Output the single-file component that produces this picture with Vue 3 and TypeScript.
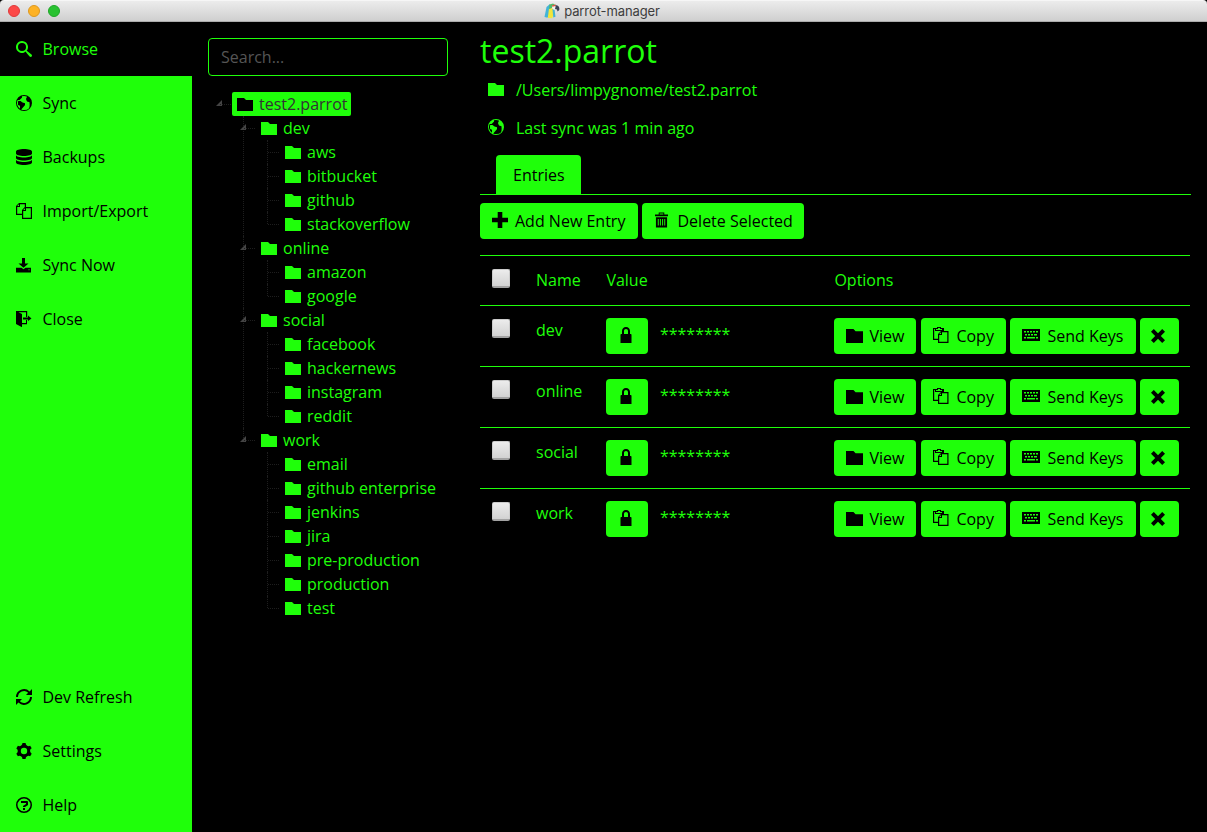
<script setup lang="ts">
interface Shape { box: string; d: string }
interface MenuItem { label: string; icon: string; active?: boolean }
interface Branch { name: string; leaves: string[] }

const icons: Record<string, Shape> = {
  search: { box: '0 0 16 16', d: 'M15.504 13.616l-3.79-3.223c-.392-.353-.811-.514-1.149-.499a6 6 0 1 0-.672.672c-.016.338.146.757.499 1.149l3.223 3.79c.552.613 1.453.665 2.003.115s.498-1.452-.115-2.003zM6 10a4 4 0 1 1 0-8 4 4 0 0 1 0 8z' },
  earth: { box: '0 0 16 16', d: 'M8 0a8 8 0 1 0 0 16A8 8 0 0 0 8 0zm0 15c-.984 0-1.92-.203-2.769-.57l3.643-4.098A.5.5 0 0 0 9 10V8.500a.5.5 0 0 0-.5-.5c-1.765 0-3.628-1.835-3.646-1.854A.5.5 0 0 0 4.500 6h-2a.5.5 0 0 0-.5.5v3c0 .189.107.363.276.447L4 10.809v2.936A6.997 6.997 0 0 1 1.674 5H3.500a.5.5 0 0 0 .354-.146l2-2A.5.5 0 0 0 6 2.500V1.289A6.994 6.994 0 0 1 11.180 1.757c-.061.053-.119.107-.176.164a3 3 0 0 0 2.119 5.122c.073 0 .147-.003.221-.008.290 1.088.57 3.903-.18 5.999a.5.5 0 0 0-.008.093A6.980 6.980 0 0 1 8 15z' },
  database: { box: '0 0 16 16', d: 'M8 0C3.580 0 0 1.120 0 2.500v2C0 5.880 3.580 7 8 7s8-1.120 8-2.500v-2C16 1.120 12.420 0 8 0zM8 8.500c-4.420 0-8-1.120-8-2.500v3c0 1.380 3.580 2.500 8 2.500s8-1.120 8-2.500V6c0 1.380-3.580 2.500-8 2.500zM8 13c-4.420 0-8-1.120-8-2.500v3C0 14.880 3.580 16 8 16s8-1.120 8-2.500v-3c0 1.380-3.580 2.500-8 2.500z' },
  copy: { box: '0 0 16 16', d: 'M10 4V0H3L0 3v9h6v4h10V4h-6zM3 1.200V3H1.200L3 1.200zM1.200 10.800V4H4V1.200h4.800V4L6 7v3.800H1.200zm7.800-5.600V7H7.200L9 5.200zM14.800 14.800H7.200V8H10V5.200h4.800v9.600z' },
  download: { box: '0 -1 16 16', d: 'M6 0h3v5.500h3.500L7.500 9.800 2.500 5.500H6zM0 9.800h5.500l2 1.400 2-1.400H15v4.700H0zM12.500 11.300v1h1v-1z' },
  exit: { box: '0 0 16 16', d: 'M12 10V8.500H7v-2h5V4.500l3.500 3zM11 9v4.200H6v3L0 13V0h11.200v6H10V1.200H2.500L6 3v9h4V9z' },
  refresh: { box: '0 0 16 16', d: 'M0 8h2a6 6 0 0 1 10.200-4.200L10 6h6V0l-2.400 2.400A8 8 0 0 0 0 8zM16 8h-2a6 6 0 0 1-10.200 4.200L6 10H0v6l2.400-2.400A8 8 0 0 0 16 8z' },
  gear: { box: '0 0 16 16', d: 'M14.590 9.535a3.060 3.060 0 0 1 1.127-4.164l-1.548-2.681a3.061 3.061 0 0 1-4.599-2.644H6.474a3.061 3.061 0 0 1-4.600 2.649L.326 5.376a3.060 3.060 0 0 1-.009 5.260l1.548 2.681a3.061 3.061 0 0 1 4.595 2.644h3.096a3.061 3.061 0 0 1 4.602-2.650l1.548-2.681a3.050 3.050 0 0 1-1.116-1.095zM8 11.190a3.190 3.190 0 1 1 0-6.380 3.190 3.190 0 0 1 0 6.380z' },
  help: { box: '0 0 16 16', d: 'M7 11h2v2H7zM11 4a1 1 0 0 1 1 1v3L9 10H7V9l3-2V6H5V4zM8 1.500a6.500 6.500 0 1 0 0 13 6.500 6.500 0 0 0 0-13zM8 0a8 8 0 1 1 0 16A8 8 0 0 1 8 0z' },
  folder: { box: '0 0 16 13', d: 'M0 0h7l2 2h7v11H0z' },
  plus: { box: '0 0 16 16', d: 'M5.700 0h4.600v5.700H16v4.600h-5.700V16H5.700v-5.700H0V5.700h5.700z' },
  trash: { box: '0 0 14 16', d: 'M4 0h6v2h4v2H0V2h4zm1 1v1h4V1zM1 5h12v11H1zm2 2v7h1V7zm2.300 0v7h1V7zm2.400 0v7h1V7zM10 7v7h1V7z' },
  lock: { box: '0 0 12 16', d: 'M10.500 7H10V4c0-2.200-1.500-4-4-4S2 1.800 2 4v3h-.5C.7 7 .5 7.500.5 8v8h11V8c0-.5-.2-1-1-1zM4 7V4c0-1.200.8-2 2-2s2 .8 2 2v3z' },
  paste: { box: '0 0 16 16', d: 'M11 4V1H8V0H4v1H0v12h5v3h10.500V4zM5 1h2v1h2v1H3V2h2zM1.200 11.800V2H2v2h8V2v2H8L5 7v4.800zm6.800-6.600V7H6.200zM14.300 14.800H6.200V8H9V5.200h5.300z' },
  keyboard: { box: '0 0 18 12', d: 'M0 0h18v12H0zM2 2v1.500h2V2zm3 0v1.500h2V2zm3 0v1.500h2V2zm3 0v1.500h2V2zm3 0v1.500h2V2zM3 5v1.500h2V5zm3 0v1.500h2V5zm3 0v1.500h2V5zm3 0v1.500h3V5zM2 8v1.500h2V8zm3 0v1.500h8V8zm9 0v1.500h2V8z' },
  cross: { box: '0 0 14 14', d: 'M0 2.800 2.800 0 7 4.200 11.200 0 14 2.800 9.800 7 14 11.200 11.200 14 7 9.800 2.800 14 0 11.200 4.200 7z' },
}

const topMenu: MenuItem[] = [
  { label: 'Browse', icon: 'search', active: true },
  { label: 'Sync', icon: 'earth' },
  { label: 'Backups', icon: 'database' },
  { label: 'Import/Export', icon: 'copy' },
  { label: 'Sync Now', icon: 'download' },
  { label: 'Close', icon: 'exit' },
]
const bottomMenu: MenuItem[] = [
  { label: 'Dev Refresh', icon: 'refresh' },
  { label: 'Settings', icon: 'gear' },
  { label: 'Help', icon: 'help' },
]
const tree: Branch[] = [
  { name: 'dev', leaves: ['aws', 'bitbucket', 'github', 'stackoverflow'] },
  { name: 'online', leaves: ['amazon', 'google'] },
  { name: 'social', leaves: ['facebook', 'hackernews', 'instagram', 'reddit'] },
  { name: 'work', leaves: ['email', 'github enterprise', 'jenkins', 'jira', 'pre-production', 'production', 'test'] },
]
</script>

<template>
  <div class="window">
    <header class="titlebar">
      <div class="lights"><i class="red"></i><i class="amber"></i><i class="green"></i></div>
      <div class="title">
        <svg class="parrot" viewBox="0 0 16 16">
          <path fill="#42b4d8" d="M6 1 2.500 4 .5 14l3 .8L7 8z" />
          <path fill="#f3e63a" d="M5 5.500 3.800 15l4.500.3 1.500-6L9 5z" />
          <path fill="#45b5cf" d="M8.500 6l.8 8.500 2.200-.8L10.500 6z" />
          <path fill="#55b96a" d="M5.500 1.500 9 .5l2 1.200L8 5 5 6z" />
          <path fill="#f5f1ee" d="M8.500 2.500h4l.5 3-3 1.500-2-2z" />
          <path fill="#e4563f" d="M8 2.200 12 1.500l-.5 1.500-3 .8z" />
          <path fill="#3c4356" d="M11.500 2c3 .3 4.300 2.200 3.800 5L13.500 8.500 13 6.500l-2-.5.5-2z" />
        </svg>
        <span>parrot-manager</span>
      </div>
    </header>

    <div class="body">
      <nav class="sidebar">
        <a v-for="m in topMenu" :key="m.label" class="item" :class="{ active: m.active }">
          <svg class="ic16" :viewBox="icons[m.icon].box"><path fill-rule="evenodd" :d="icons[m.icon].d" /></svg>{{ m.label }}
        </a>
        <div class="spacer"></div>
        <a v-for="m in bottomMenu" :key="m.label" class="item">
          <svg class="ic16" :viewBox="icons[m.icon].box"><path fill-rule="evenodd" :d="icons[m.icon].d" /></svg>{{ m.label }}
        </a>
      </nav>

      <aside class="browser">
        <input class="search" type="text" placeholder="Search..." />
        <div class="tree">
          <div class="node root">
            <span class="twig"><svg class="arrow" viewBox="0 0 6 6"><path d="M6 0v6H0z" /></svg></span>
            <span class="label selected"><svg class="folder" :viewBox="icons.folder.box"><path :d="icons.folder.d" /></svg>test2.parrot</span>
          </div>
          <div v-for="b in tree" :key="b.name" class="branch">
            <div class="node">
              <span class="twig"><svg class="arrow" viewBox="0 0 6 6"><path d="M6 0v6H0z" /></svg></span>
              <span class="label"><svg class="folder" :viewBox="icons.folder.box"><path :d="icons.folder.d" /></svg>{{ b.name }}</span>
            </div>
            <div v-for="l in b.leaves" :key="l" class="node leaf">
              <span class="twig"></span>
              <span class="label"><svg class="folder" :viewBox="icons.folder.box"><path :d="icons.folder.d" /></svg>{{ l }}</span>
            </div>
          </div>
        </div>
      </aside>

      <main class="content">
        <h1>test2.parrot</h1>
        <div class="info"><svg class="folder" :viewBox="icons.folder.box"><path :d="icons.folder.d" /></svg><span>/Users/limpygnome/test2.parrot</span></div>
        <div class="info"><svg class="ic16" :viewBox="icons.earth.box"><path fill-rule="evenodd" :d="icons.earth.d" /></svg><span>Last sync was 1 min ago</span></div>
        <div class="tabs"><span class="tab">Entries</span></div>
        <div class="actions">
          <button class="btn add"><svg class="ic16" :viewBox="icons.plus.box"><path :d="icons.plus.d" /></svg>Add New Entry</button>
          <button class="btn del"><svg class="trash" :viewBox="icons.trash.box"><path fill-rule="evenodd" :d="icons.trash.d" /></svg>Delete Selected</button>
        </div>
        <div class="table">
          <div class="row head">
            <div><i class="check"></i></div><div>Name</div><div>Value</div><div>Options</div>
          </div>
          <div v-for="b in tree" :key="b.name" class="row">
            <div><i class="check"></i></div>
            <div>{{ b.name }}</div>
            <div class="value">
              <button class="btn lockbtn"><svg class="lock" :viewBox="icons.lock.box"><path fill-rule="evenodd" :d="icons.lock.d" /></svg></button>
              <span>********</span>
            </div>
            <div class="options">
              <button class="btn view"><svg class="folder" :viewBox="icons.folder.box"><path :d="icons.folder.d" /></svg>View</button>
              <button class="btn copy"><svg class="ic16" :viewBox="icons.paste.box"><path fill-rule="evenodd" :d="icons.paste.d" /></svg>Copy</button>
              <button class="btn keys"><svg class="keyboard" :viewBox="icons.keyboard.box"><path fill-rule="evenodd" :d="icons.keyboard.d" /></svg>Send Keys</button>
              <button class="btn remove"><svg class="cross" :viewBox="icons.cross.box"><path :d="icons.cross.d" /></svg></button>
            </div>
          </div>
        </div>
      </main>
    </div>
  </div>
</template>

<style>
html, body { margin: 0; background: #000; overflow: hidden; }
</style>

<style scoped>
* { box-sizing: border-box; }
.window { --g: #1fff0a; height: 832px; display: flex; flex-direction: column; background: #000; color: var(--g); font: 16px/24px "Open Sans", sans-serif; overflow: hidden; }
svg { fill: currentColor; flex: none; display: block; }
.ic16 { width: 16px; height: 16px; }
.titlebar { height: 22px; flex: none; display: grid; grid-template-columns: 1fr auto 1fr; align-items: center; background: linear-gradient(#ececec, #cfcfcf); border-top: 1px solid #f6f6f6; border-bottom: 1px solid #acacac; border-radius: 4px 4px 0 0; }
.lights { display: flex; gap: 8px; padding-left: 8px; }
.lights i { width: 12px; height: 12px; border-radius: 50%; }
.red { background: #fc4948; border: 1px solid #df3a3b; }
.amber { background: #fdb225; border: 1px solid #dd981f; }
.green { background: #29c231; border: 1px solid #1fa628; }
.title { display: flex; align-items: center; gap: 4px; padding-right: 3px; font: 13px/20px Inter, sans-serif; letter-spacing: -0.1px; color: #3d3d3d; }
.parrot { width: 16px; height: 16px; }
.body { flex: 1; display: flex; min-height: 0; }
.sidebar { width: 192px; flex: none; display: flex; flex-direction: column; background: var(--g); color: #000; }
.item { height: 54px; display: flex; align-items: center; gap: 10.5px; padding-left: 16px; }
.item.active { background: #000; color: var(--g); }
.spacer { flex: 1; }
.browser { width: 272px; flex: none; padding: 16px 16px 0; }
.search { display: block; width: 240px; height: 38px; padding: 0 12px; border: 1px solid var(--g); border-radius: 4px; background: #000; color: var(--g); font: inherit; outline: none; }
.search::placeholder { color: #555; opacity: 1; }
.tree { padding-top: 16px; }
.node { display: flex; height: 24px; }
.twig { width: 24px; position: relative; }
.twig::after { content: ""; position: absolute; left: 12px; right: 1px; top: 12px; border-top: 1px dotted #1e1e1e; }
.arrow { position: absolute; left: 8px; top: 8px; width: 6px; height: 6px; fill: #444; }
.label { display: flex; align-items: center; gap: 6px; padding: 0 4px 0 5px; border-radius: 2px; white-space: nowrap; }
.label.selected { background: var(--g); color: #333; }
.selected .folder { fill: #000; }
.folder { width: 16px; height: 13px; }
.label .folder { margin-top: 1px; }
.branch { padding-left: 24px; position: relative; }
.branch::before { content: ""; position: absolute; left: 35px; top: 0; bottom: 0; border-left: 1px dotted #1e1e1e; }
.branch:last-child::before { bottom: auto; height: 12px; }
.leaf { padding-left: 24px; }
.leaf .twig::before { content: ""; position: absolute; left: 11px; top: 0; height: 24px; border-left: 1px dotted #1e1e1e; }
.leaf:last-child .twig::before { height: 12px; }
.content { flex: 1; padding: 8px 17px 0 16px; min-width: 0; }
h1 { margin: 0; font-size: 32px; font-weight: 400; line-height: 41px; height: 41px; }
.info { height: 38px; display: flex; align-items: center; padding-left: 8px; }
.info svg { margin-top: -2px; }
.info span { margin-left: 12px; }
.tabs { height: 48px; padding: 8px 0 0 16px; border-bottom: 1px solid var(--g); margin-right: -1px; }
.tab { display: block; width: 85px; height: 40px; line-height: 41px; padding-left: 17px; background: var(--g); color: #000; border-radius: 4px 4px 0 0; }
.actions { display: flex; gap: 4px; padding: 8px 0 16px; }
.btn { height: 36px; flex: none; display: flex; align-items: center; gap: 7px; border: 0; margin: 0; padding: 0 0 0 12px; border-radius: 4px; background: var(--g); color: #000; font: inherit; white-space: nowrap; }
.btn svg { margin-top: -2px; }
.add { width: 158px; }
.del { width: 162px; padding-left: 13px; gap: 9.5px; }
.trash { width: 13px; height: 16px; }
.row { height: 61px; border-top: 1px solid var(--g); display: grid; grid-template-columns: 56px 70.4px 228px 355px; padding-top: 12px; }
.row.head { height: 50px; }
.check { display: block; width: 18px; height: 19px; margin: 1px 0 0 12px; border-radius: 2px; border: 1px solid #ccc; border-bottom: 2px solid #a2a2a2; background: linear-gradient(#ececec, #d2d2d2); }
.value { display: flex; gap: 12px; }
.value span { margin-top: 4px; }
.lockbtn { width: 41.5px; padding-left: 13.5px; }
.lock { width: 12px; height: 16px; }
.options { display: flex; gap: 4.5px; }
.view { width: 82px; gap: 6px; }
.view .folder { width: 17px; height: 14px; margin-top: -1px; }
.copy { width: 85px; padding-left: 12.5px; }
.keys { width: 125.5px; gap: 7px; }
.keyboard { width: 18px; height: 12px; }
.remove { width: 39px; padding-left: 11px; }
.cross { width: 14px; height: 14px; }
.btn .cross { margin-top: 0; }
</style>
